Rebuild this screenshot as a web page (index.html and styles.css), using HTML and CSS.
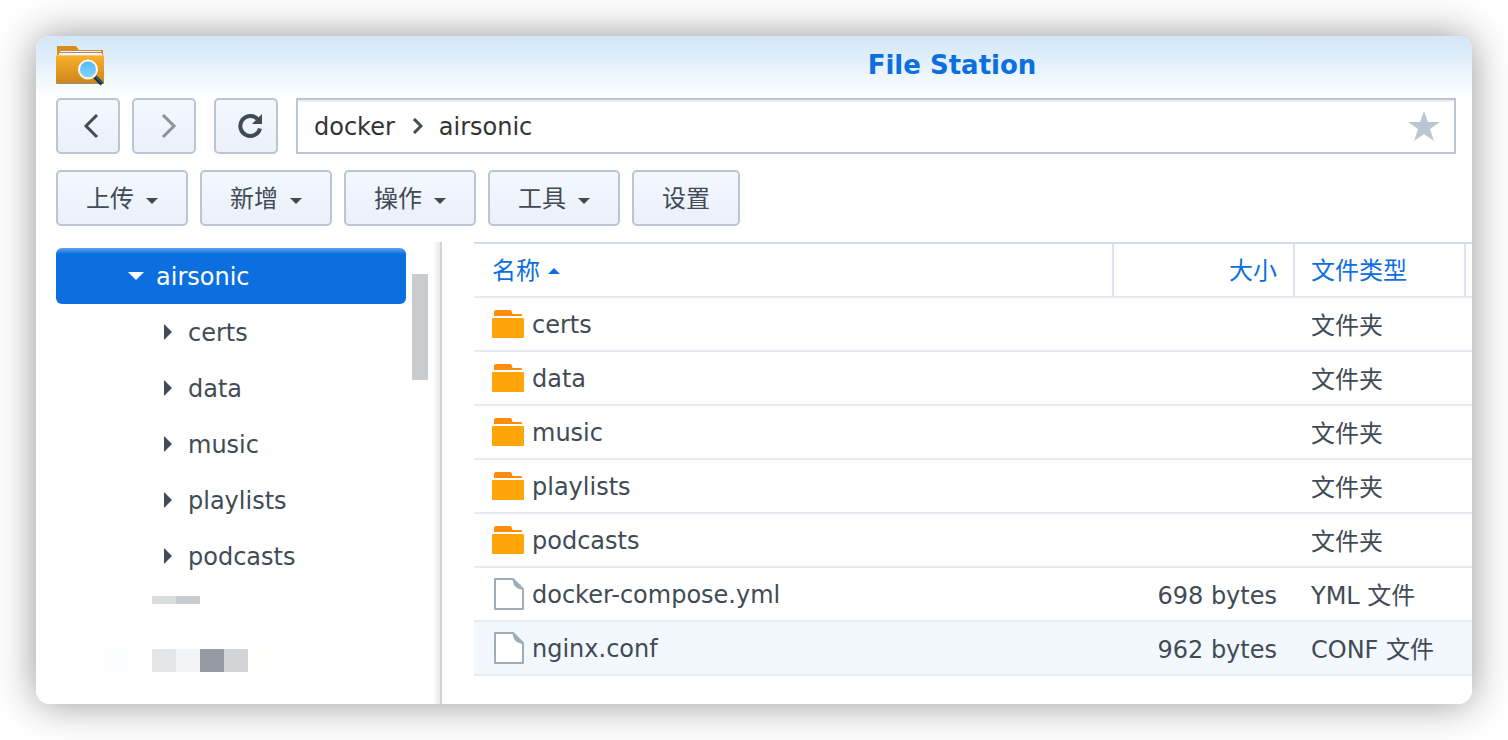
FILE: index.html
```
<!DOCTYPE html>
<html lang="zh-CN">
<head>
<meta charset="utf-8">
<title>File Station</title>
<link rel="stylesheet" href="styles.css">
</head>
<body>
<svg class="defs" aria-hidden="true">
  <symbol id="folder" viewBox="0 0 32 28">
    <path fill="#ff8c0a" d="M2 6V2q0-2 2-2h14q1.500 0 2 2l.5 2H29q1 0 1 2z"/>
    <rect y="8" width="32" height="20" rx="1" fill="#ffa50a"/>
  </symbol>
  <symbol id="file" viewBox="0 0 32 32">
    <path fill="#fff" stroke="#9eadb8" stroke-width="2" stroke-linejoin="round" d="M3 1h18l10 10v20H3z"/>
    <path fill="#9eadb8" d="M20.500 1l10.500 10v1q-3-.5-6-2-4-2.500-4.500-9z"/>
  </symbol>
  <symbol id="caret" viewBox="0 0 12 6"><path fill="currentColor" d="M0 0h12L6 6z"/></symbol>
  <symbol id="closed" viewBox="0 0 16 16"><path fill="currentColor" d="M4 0l8 8-8 8z"/></symbol>
</svg>
<div class="window">
  <header class="titlebar">
    <svg class="app-icon" viewBox="0 0 48 42" aria-hidden="true">
      <defs>
        <linearGradient id="body" x1="0" y1="0" x2="0" y2="1"><stop offset="0" stop-color="#fcb02f"/><stop offset="1" stop-color="#cd8717"/></linearGradient>
        <linearGradient id="glass" x1="0" y1="0" x2="0" y2="1"><stop offset="0" stop-color="#50b8fa"/><stop offset="1" stop-color="#84d5fd"/></linearGradient>
      </defs>
      <rect y="34" width="48" height="4" rx="1" fill="#4e4a42" opacity=".6"/>
      <path fill="#d98c1c" d="M1 0h19l3 4h24v8H1z"/>
      <path fill="#f4f4f4" d="M4 5h41v2h1v2H3V7h1z"/>
      <path stroke="#8f8f8f" d="M4 6.500h41"/>
      <rect y="9" width="48" height="28" rx="1" fill="url(#body)"/>
      <path stroke="#ffc75d" d="M0 9.500h48"/>
      <path stroke="#17344f" stroke-width="4" d="M39 31l7 7"/>
      <path stroke="#3377a8" d="M40 31l6 6"/>
      <circle cx="32" cy="23.500" r="9" fill="url(#glass)" stroke="#fff8e8" stroke-width="2"/>
    </svg>
    <h1 class="title">File Station</h1>
  </header>

  <nav class="navigation" aria-label="导航">
    <button class="button nav-button" aria-label="后退"><svg width="60" height="52" viewBox="0 0 60 52"><path class="line" d="M39 15L28 26l11 11"/></svg></button>
    <button class="button nav-button muted" aria-label="前进"><svg width="60" height="52" viewBox="0 0 60 52"><path class="line" d="M29 15l11 11-11 11"/></svg></button>
    <button class="button nav-button reload" aria-label="刷新"><svg width="60" height="52" viewBox="0 0 60 52"><path class="line thick" d="M44 28.500A10 10 0 1 1 41.500 19"/><path fill="currentColor" d="M46 14v10H36z"/></svg></button>
    <div class="path">
      <a class="crumb" href="#docker">docker</a>
      <svg width="12" height="16" viewBox="0 0 12 16" aria-hidden="true"><path class="line" d="M3 1l7 7-7 7"/></svg>
      <a class="crumb" href="#airsonic">airsonic</a>
      <button class="star" aria-label="收藏"><svg width="32" height="32" viewBox="0 0 32 32"><path fill="#bcc7d5" d="M16 1l4 11h12l-10 7 4 12-10-7-10 7 4-12L0 12h12z"/></svg></button>
    </div>
  </nav>

  <div class="toolbar">
    <button class="button">上传<svg class="caret"><use href="#caret"/></svg></button>
    <button class="button">新增<svg class="caret"><use href="#caret"/></svg></button>
    <button class="button">操作<svg class="caret"><use href="#caret"/></svg></button>
    <button class="button">工具<svg class="caret"><use href="#caret"/></svg></button>
    <button class="button">设置</button>
  </div>

  <div class="workspace">
    <aside class="sidebar">
      <div class="tree">
        <a class="node selected" href="#airsonic"><svg width="16" height="8" viewBox="0 0 16 8"><path fill="currentColor" d="M0 0h16L8 8z"/></svg><span class="label">airsonic</span></a>
        <a class="node" href="#certs"><svg class="toggle"><use href="#closed"/></svg><span class="label">certs</span></a>
        <a class="node" href="#data"><svg class="toggle"><use href="#closed"/></svg><span class="label">data</span></a>
        <a class="node" href="#music"><svg class="toggle"><use href="#closed"/></svg><span class="label">music</span></a>
        <a class="node" href="#playlists"><svg class="toggle"><use href="#closed"/></svg><span class="label">playlists</span></a>
        <a class="node" href="#podcasts"><svg class="toggle"><use href="#closed"/></svg><span class="label">podcasts</span></a>
        <div class="redacted short"><i class="cream"></i><i></i><i class="silver"></i><i class="gray"></i></div>
        <div class="redacted"><i class="ice"></i><i></i><i class="light"></i><i class="pale"></i><i class="slate"></i><i class="ash"></i><i class="cream"></i></div>
      </div>
      <div class="scrollbar"></div>
    </aside>

    <main class="content">
      <table class="files">
        <colgroup><col><col class="col-size"><col class="col-type"><col class="col-rest"></colgroup>
        <thead>
          <tr><th><span class="cell">名称<svg class="sort" viewBox="0 0 12 6"><path fill="currentColor" d="M0 6h12L6 0z"/></svg></span></th><th class="size">大小</th><th>文件类型</th><th></th></tr>
        </thead>
        <tbody>
          <tr><td><span class="cell"><svg class="folder"><use href="#folder"/></svg><span class="label">certs</span></span></td><td class="size"></td><td colspan="2">文件夹</td></tr>
          <tr><td><span class="cell"><svg class="folder"><use href="#folder"/></svg><span class="label">data</span></span></td><td class="size"></td><td colspan="2">文件夹</td></tr>
          <tr><td><span class="cell"><svg class="folder"><use href="#folder"/></svg><span class="label">music</span></span></td><td class="size"></td><td colspan="2">文件夹</td></tr>
          <tr><td><span class="cell"><svg class="folder"><use href="#folder"/></svg><span class="label">playlists</span></span></td><td class="size"></td><td colspan="2">文件夹</td></tr>
          <tr><td><span class="cell"><svg class="folder"><use href="#folder"/></svg><span class="label">podcasts</span></span></td><td class="size"></td><td colspan="2">文件夹</td></tr>
          <tr><td><span class="cell"><svg class="file"><use href="#file"/></svg><span class="label">docker-compose.yml</span></span></td><td class="size">698 bytes</td><td colspan="2">YML 文件</td></tr>
          <tr class="hovered"><td><span class="cell"><svg class="file"><use href="#file"/></svg><span class="label">nginx.conf</span></span></td><td class="size">962 bytes</td><td colspan="2">CONF 文件</td></tr>
        </tbody>
      </table>
    </main>
  </div>
</div>
</body>
</html>
```

FILE: styles.css
```
* {
  box-sizing: border-box;
}

body {
  margin: 0;
  min-height: 100vh;
  padding: 36px;
  display: flex;
  background: #fff;
  color: #414b55;
  font-family: "DejaVu Sans", "Noto Sans CJK SC", sans-serif;
  font-size: 24px;
  line-height: 32px;
}

svg {
  display: block;
  flex: none;
  fill: none;
}

a {
  color: inherit;
  text-decoration: none;
}

button {
  font: inherit;
  color: inherit;
}

.defs {
  position: absolute;
  width: 0;
  height: 0;
}

.window {
  flex: 1;
  min-width: 0;
  display: flex;
  flex-direction: column;
  overflow: hidden;
  border-radius: 14px;
  background: linear-gradient(#d2e7f8, #e0eefc 22px, #fff 60px);
  box-shadow: 0 0 40px rgba(0, 0, 0, 0.42);
}

.titlebar {
  display: flex;
  align-items: center;
  height: 62px;
  padding: 0 20px;
}

.app-icon {
  width: 48px;
  height: 42px;
}

.title {
  flex: 1;
  margin: 0;
  padding-left: 348px;
  padding-bottom: 4px;
  text-align: center;
  color: #0c6fe0;
  font-size: 26px;
  line-height: 32px;
}

.navigation {
  display: flex;
  gap: 12px;
  padding: 0 16px 0 20px;
}

.button {
  display: flex;
  align-items: center;
  justify-content: center;
  gap: 12px;
  height: 56px;
  padding: 2px 28px 0;
  border: 2px solid #bac6d4;
  border-radius: 5px;
  background: linear-gradient(#f4f8ff, #ebf0f9);
}

.nav-button {
  flex: none;
  width: 64px;
  padding: 0;
}

.muted {
  color: #87939d;
}

.reload {
  margin: 0 6px;
}

.line {
  stroke: currentColor;
  stroke-width: 3;
}

.thick {
  stroke-width: 4;
}

.path {
  flex: 1;
  display: flex;
  align-items: center;
  gap: 16px;
  height: 56px;
  padding: 0 14px 0 16px;
  border: 2px solid #bac6d4;
  background: #fff;
  box-shadow: inset 0 2px #eeeff0;
}

.crumb {
  padding-top: 2px;
  color: #333;
}

.label {
  padding-top: 2px;
}

.star {
  margin-left: auto;
  padding: 0;
  border: 0;
  background: none;
}

.toolbar {
  display: flex;
  gap: 12px;
  padding: 16px 20px;
}

.caret {
  width: 12px;
  height: 6px;
  margin-top: 4px;
}

.workspace {
  flex: 1;
  display: flex;
}

.sidebar {
  flex: none;
  display: flex;
  gap: 6px;
  width: 406px;
  padding: 6px 12px 0 20px;
  border-right: 2px solid #d3d4d5;
  background: linear-gradient(to left, #e9e9e9, #fff 7px);
}

.tree {
  flex: 1;
}

.node {
  display: flex;
  align-items: center;
  gap: 12px;
  height: 56px;
  padding-left: 104px;
}

.selected {
  padding-left: 72px;
  border-radius: 6px;
  background: linear-gradient(#63a4ef, #0c6fe0 6px);
  color: #fff;
}

.toggle {
  width: 16px;
  height: 16px;
}

.redacted {
  display: grid;
  grid-template-columns: repeat(7, 24px);
  height: 23px;
  margin: 45px 0 0 48px;
}

.short {
  height: 8px;
  margin-top: 12px;
}

.cream { background: #fefefc; }
.ice { background: #fcfdff; }
.silver { background: #dadede; }
.gray { background: #c9cdcf; }
.light { background: #e4e6e8; }
.pale { background: #f3f4f7; }
.slate { background: #959aa3; }
.ash { background: #d3d4d6; }

.scrollbar {
  width: 16px;
  height: 106px;
  margin-top: 26px;
  background: #c8cccf;
}

.content {
  flex: 1;
  min-width: 0;
  padding-left: 32px;
}

.files {
  width: 100%;
  table-layout: fixed;
  border-spacing: 0;
}

.col-size { width: 181px; }
.col-type { width: 171px; }
.col-rest { width: 6px; }

.files th,
.files td {
  height: 54px;
  padding: 4px 0 0 16px;
  border-bottom: 2px solid #e6ebf1;
  text-align: left;
  font-weight: normal;
  white-space: nowrap;
}

.files th {
  height: 56px;
  padding-top: 2px;
  border-top: 2px solid #cfdcea;
  border-right: 2px solid #d9e4f0;
  color: #0c6fe0;
}

.files th:first-child,
.files td:first-child {
  padding-left: 18px;
}

.files td:first-child {
  padding-top: 0;
}

.files th:last-child {
  padding: 0;
  border-right: 0;
}

.files .size {
  padding-right: 18px;
  text-align: right;
}

.files th.size {
  padding-right: 16px;
}

.cell {
  display: flex;
  align-items: center;
  gap: 8px;
}

.sort {
  width: 12px;
  height: 6px;
}

.folder {
  width: 32px;
  height: 28px;
}

.file {
  width: 32px;
  height: 32px;
}

.hovered {
  background: #f3f8ff;
}
```
